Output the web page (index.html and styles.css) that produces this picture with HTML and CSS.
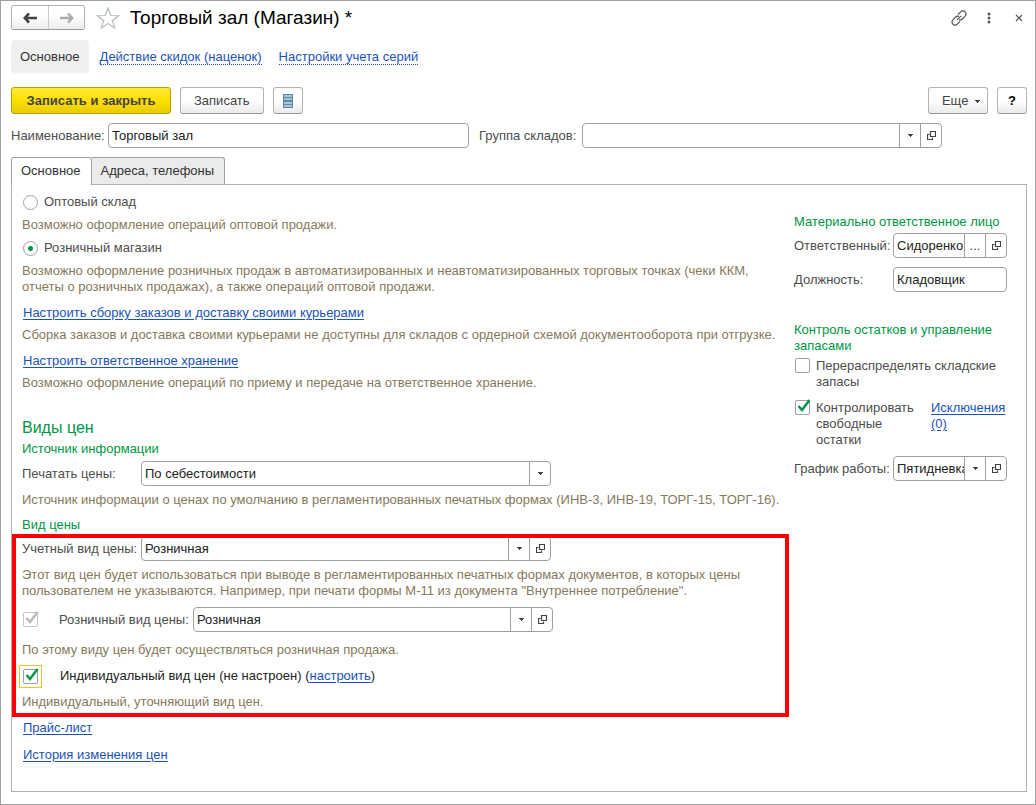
FILE: index.html
```html
<!DOCTYPE html>
<html lang="ru">
<head>
<meta charset="utf-8">
<meta name="viewport" content="width=device-width, initial-scale=1">
<title>Торговый зал (Магазин) *</title>
<link rel="stylesheet" href="styles.css">
</head>
<body>
<svg class="sprite" aria-hidden="true">
  <symbol id="caret" viewBox="0 0 5 3"><path d="M0 0h5v1h-1v1h-1v1h-1v-1h-1v-1h-1z" fill="#444"/></symbol>
  <symbol id="open" viewBox="0 0 9 9"><path d="M3.500.500h5v5h-5zM2.500 3.500h-2v5h5v-2" fill="none" stroke="#444" stroke-width="1.200"/></symbol>
</svg>
<div class="window">
  <header class="titlebar">
    <div class="history">
      <button type="button" class="history-btn" aria-label="Назад"><svg width="14" height="12" viewBox="0 0 14 12"><path d="M6 1.500 1.800 6l4.200 4.500M2 6h12" fill="none" stroke="#444" stroke-width="2.600"/></svg></button>
      <button type="button" class="history-btn" aria-label="Вперед"><svg width="14" height="12" viewBox="0 0 14 12"><path d="M8 1.500 12.200 6l-4.200 4.500M12 6H0" fill="none" stroke="#aaa" stroke-width="2.400"/></svg></button>
    </div>
    <button type="button" class="plain star" aria-label="В избранное"><svg width="24" height="22" viewBox="0 0 24 22"><path d="M12 1l2.700 7.500 8 .2-6.300 4.800 2.300 7.500-6.700-4.400L5.300 21l2.300-7.500L1.300 8.700l8-.2z" fill="#fff" stroke="#b4bac2" stroke-width="1.200"/></svg></button>
    <h1 class="title">Торговый зал (Магазин) *</h1>
    <div class="window-tools">
      <button type="button" class="plain" aria-label="Ссылка"><svg width="16" height="16" viewBox="0 0 16 16" fill="none" stroke="#555" stroke-width="1.200"><path d="M7 4.500l2.700-2.700a3 3 0 0 1 4.400 4.400L11.400 9a3 3 0 0 1-3.400.6M9 11.500l-2.700 2.700a3 3 0 0 1-4.400-4.400L4.600 7A3 3 0 0 1 8 6.400M5.800 10.200l4.400-4.400"/></svg></button>
      <button type="button" class="plain" aria-label="Меню"><svg width="4" height="12" viewBox="0 0 4 12" fill="#555"><circle cx="2" cy="2" r="1.500"/><circle cx="2" cy="6" r="1.500"/><circle cx="2" cy="10" r="1.500"/></svg></button>
      <button type="button" class="plain" aria-label="Закрыть"><svg width="8" height="8" viewBox="0 0 8 8"><path d="M1 1l6 6M7 1L1 7" stroke="#555" stroke-width="1.200"/></svg></button>
    </div>
  </header>

  <nav class="sections">
    <a class="section current" href="#main">Основное</a>
    <a class="section" href="#discounts"><span>Действие скидок (наценок)</span></a>
    <a class="section" href="#series"><span>Настройки учета серий</span></a>
  </nav>

  <div class="commands">
    <button type="button" class="btn primary">Записать и закрыть</button>
    <button type="button" class="btn">Записать</button>
    <button type="button" class="btn square" aria-label="Список"><svg width="10" height="14" viewBox="0 0 10 14"><path d="M0 0h10v14H0z" fill="#5f87a5"/><path d="M1 1h8v2H1zM1 4h8v2H1zM1 8h8v2H1zM1 11h8v2H1z" fill="#a9c5da"/></svg></button>
    <button type="button" class="btn more">Еще <svg width="5" height="3"><use href="#caret"/></svg></button>
    <button type="button" class="btn square help">?</button>
  </div>

  <div class="head-fields">
    <label for="name">Наименование:</label>
    <div class="field"><input id="name" type="text" value="Торговый зал"></div>
    <label for="group" class="group-label">Группа складов:</label>
    <div class="field pick open">
      <select id="group"><option></option></select>
      <span class="arrow"><svg width="5" height="3"><use href="#caret"/></svg></span>
      <button type="button" aria-label="Открыть группу"><svg width="9" height="9"><use href="#open"/></svg></button>
    </div>
  </div>

  <div class="tabs" role="tablist">
    <button type="button" class="tab active" role="tab" aria-selected="true">Основное</button>
    <button type="button" class="tab" role="tab" aria-selected="false">Адреса, телефоны</button>
  </div>

  <main class="panel">
    <div class="main-col">
      <section class="kind">
        <label class="choice"><input type="radio" name="kind">Оптовый склад</label>
        <p class="hint">Возможно оформление операций оптовой продажи.</p>
        <label class="choice"><input type="radio" name="kind" checked>Розничный магазин</label>
        <p class="hint">Возможно оформление розничных продаж в автоматизированных и неавтоматизированных торговых точках (чеки ККМ,<br>отчеты о розничных продажах), а также операций оптовой продажи.</p>
      </section>
      <section class="setup">
        <a href="#delivery">Настроить сборку заказов и доставку своими курьерами</a>
        <p class="hint">Сборка заказов и доставка своими курьерами не доступны для складов с ордерной схемой документооборота при отгрузке.</p>
      </section>
      <section class="setup">
        <a href="#storage">Настроить ответственное хранение</a>
        <p class="hint">Возможно оформление операций по приему и передаче на ответственное хранение.</p>
      </section>

      <section class="prices">
        <h2 class="heading">Виды цен</h2>
        <h3 class="subheading">Источник информации</h3>
        <div class="row">
          <label for="print">Печатать цены:</label>
          <div class="field pick">
            <select id="print"><option>По себестоимости</option></select>
            <span class="arrow"><svg width="5" height="3"><use href="#caret"/></svg></span>
          </div>
        </div>
        <p class="hint">Источник информации о ценах по умолчанию в регламентированных печатных формах (ИНВ-3, ИНВ-19, ТОРГ-15, ТОРГ-16).</p>
      </section>

      <h3 class="subheading kind-heading">Вид цены</h3>
      <section class="price-kind">
        <div class="row">
          <label for="account">Учетный вид цены:</label>
          <div class="field pick open">
            <select id="account"><option>Розничная</option></select>
            <span class="arrow"><svg width="5" height="3"><use href="#caret"/></svg></span>
            <button type="button" aria-label="Открыть учетный вид цены"><svg width="9" height="9"><use href="#open"/></svg></button>
          </div>
        </div>
        <p class="hint account-hint">Этот вид цен будет использоваться при выводе в регламентированных печатных формах документов, в которых цены<br>пользователем не указываются. Например, при печати формы М-11 из документа "Внутреннее потребление".</p>
        <div class="row retail">
          <span class="tick"><input type="checkbox" checked disabled aria-label="Розничный вид цены"><svg class="mark" viewBox="0 0 16 16"><path d="M3.500 7 7 11 14.500 1"/></svg></span>
          <label for="retail">Розничный вид цены:</label>
          <div class="field pick open">
            <select id="retail"><option>Розничная</option></select>
            <span class="arrow"><svg width="5" height="3"><use href="#caret"/></svg></span>
            <button type="button" aria-label="Открыть розничный вид цены"><svg width="9" height="9"><use href="#open"/></svg></button>
          </div>
        </div>
        <p class="hint">По этому виду цен будет осуществляться розничная продажа.</p>
        <div class="row individual">
          <span class="tick focused"><input id="individual" type="checkbox" checked><svg class="mark" viewBox="0 0 16 16"><path d="M3.500 7 7 11 14.500 1"/></svg></span>
          <span><label for="individual">Индивидуальный вид цен (не настроен)</label> (<a href="#setup">настроить</a>)</span>
        </div>
        <p class="hint">Индивидуальный, уточняющий вид цен.</p>
      </section>

      <div class="links">
        <a href="#pricelist">Прайс-лист</a>
        <a href="#history">История изменения цен</a>
      </div>
    </div>

    <aside class="side-col">
      <section class="side-group">
        <h3 class="subheading">Материально ответственное лицо</h3>
        <div class="row">
          <label for="person">Ответственный:</label>
          <div class="field choose">
            <input id="person" type="text" value="Сидоренко">
            <button type="button" aria-label="Выбрать">...</button>
            <button type="button" aria-label="Открыть ответственного"><svg width="9" height="9"><use href="#open"/></svg></button>
          </div>
        </div>
        <div class="row position">
          <label for="position">Должность:</label>
          <div class="field"><input id="position" type="text" value="Кладовщик"></div>
        </div>
      </section>
      <section class="side-group">
        <h3 class="subheading">Контроль остатков и управление запасами</h3>
        <div class="check-row">
          <span class="tick"><input id="redistribute" type="checkbox"></span>
          <label for="redistribute">Перераспределять складские запасы</label>
        </div>
        <div class="check-row control">
          <span class="tick"><input id="control" type="checkbox" checked><svg class="mark" viewBox="0 0 16 16"><path d="M3.500 7 7 11 14.500 1"/></svg></span>
          <label for="control">Контролировать свободные остатки</label>
          <a href="#exceptions">Исключения (0)</a>
        </div>
        <div class="row schedule">
          <label for="schedule">График работы:</label>
          <div class="field pick open">
            <select id="schedule"><option>Пятидневка</option></select>
            <span class="arrow"><svg width="5" height="3"><use href="#caret"/></svg></span>
            <button type="button" aria-label="Открыть график"><svg width="9" height="9"><use href="#open"/></svg></button>
          </div>
        </div>
      </section>
    </aside>
  </main>
</div>
</body>
</html>
```
FILE: styles.css
```css
* { box-sizing: border-box; }

body {
  margin: 0;
  background: #fff;
  color: #4d4d4d;
  font: 13px/16px "Liberation Sans", Arial, sans-serif;
}

h1, h2, h3, p { margin: 0; font-weight: normal; }

button, input, select { font: inherit; color: inherit; margin: 0; }

a { color: #1a53b8; text-underline-offset: 2px; }

.sprite { display: none; }

.window {
  min-height: 100vh;
  padding: 4px 8px 12px 10px;
  border: 1px solid #a0a0a0;
}

/* Title bar */

.titlebar { display: flex; align-items: center; height: 25px; }

.history {
  display: flex;
  height: 25px;
  border: 1px solid #b3b3b3;
  border-bottom-color: #999;
  border-radius: 3px;
  overflow: hidden;
}

.history-btn {
  display: grid;
  place-items: center;
  width: 36px;
  padding: 0;
  border: 0;
  background: linear-gradient(#fff 40%, #ececec);
}

.history-btn + .history-btn { border-left: 1px solid #ccc; }

.plain { display: grid; place-items: center; padding: 0; border: 0; background: none; }

.star { margin: 0 10px 0 11px; }

.title { color: #000; font-size: 19px; line-height: 24px; }

.window-tools { display: flex; align-items: center; gap: 14px; margin-left: auto; }

.window-tools .plain { width: 16px; height: 22px; }

/* Sections */

.sections { display: flex; margin-top: 10px; }

.section { margin-right: 17px; padding: 10px 0 7px; text-decoration: none; }

.section.current {
  margin-right: 11px;
  padding: 9px 9px 8px;
  border-radius: 4px;
  background: #f0f0f0;
  color: #333;
}

.section:not(.current) { padding-top: 9px; }

.section span { border-bottom: 1px dotted #1a53b8; }

/* Command bar */

.commands { display: flex; gap: 9px; margin-top: 14px; }

.btn {
  height: 27px;
  padding: 0 13px;
  border: 1px solid #b3b3b3;
  border-bottom-color: #999;
  border-radius: 3px;
  background: linear-gradient(#fff 50%, #eaeaea);
  color: #444;
}

.primary {
  min-width: 160px;
  border-color: #b3a000;
  background: linear-gradient(#ffe83a, #ffe000 50%, #e8cb00);
  font-weight: bold;
}

.square { display: grid; place-items: center; width: 30px; padding: 0; }

.more { margin-left: auto; padding: 0 7px 0 13px; }

.more svg { margin-left: 3px; vertical-align: 2px; }

.help { color: #000; font-weight: bold; }

/* Fields */

.field {
  display: grid;
  grid-template-columns: minmax(0, 1fr);
  height: 25px;
  border: 1px solid #a0a0a0;
  border-radius: 4px;
  background: #fff;
  color: #222;
}

.field.pick { grid-template-columns: minmax(0, 1fr) 21px; }
.field.open { grid-template-columns: minmax(0, 1fr) 21px 21px; }
.field.choose { grid-template-columns: minmax(0, 1fr) 21px 21px; }

.field input, .field select {
  grid-row: 1;
  grid-column: 1;
  width: 100%;
  height: 23px;
  padding: 0 0 0 3px;
  border: 0;
  outline: 0;
  background: none;
  appearance: none;
}

.field.pick select { grid-column: 1 / 3; padding-right: 21px; }

.field .arrow, .field button {
  display: grid;
  place-items: center;
  padding: 0;
  border: 0;
  border-left: 1px solid #a0a0a0;
  background: none;
  color: #444;
}

.field .arrow { grid-row: 1; grid-column: 2; pointer-events: none; }

.head-fields {
  display: grid;
  grid-template-columns: 97px 361fr 113px 360fr 85px;
  align-items: center;
  margin-top: 9px;
}

.group-label { margin-left: 10px; }

/* Tabs */

.tabs { display: flex; margin-top: 9px; }

.tab {
  height: 27px;
  padding: 0 10px 1px 9px;
  border: 1px solid #a0a0a0;
  border-bottom: 0;
  border-left: 0;
  border-radius: 0 3px 0 0;
  background: #ebebeb;
  color: #333;
}

.tab.active {
  height: 28px;
  margin-bottom: -1px;
  padding-bottom: 2px;
  border-left: 1px solid #a0a0a0;
  border-radius: 3px 3px 0 0;
  background: #fff;
  z-index: 1;
}

.panel {
  display: grid;
  grid-template-columns: minmax(0, 1fr) 213px;
  gap: 8px;
  padding: 9px 19px 28px 10px;
  border: 1px solid #b0b0b0;
}

.hint { color: #857a5b; }

.heading { color: #009646; font-size: 16px; line-height: 20px; }

.subheading { color: #009646; font-size: 13px; }

.row { display: grid; grid-template-columns: 119px minmax(0, 410px); align-items: center; }

/* Main column */

.kind { display: grid; gap: 7px; }

.choice { display: flex; align-items: center; gap: 6px; padding-left: 1px; }

input[type="radio"] {
  width: 15px;
  height: 15px;
  border: 1px solid #a0a0a0;
  border-radius: 50%;
  background: #fff;
  appearance: none;
}

input[type="radio"]:checked { background: radial-gradient(circle, #009646 2px, #fff 3px); }

.setup { display: grid; justify-items: start; gap: 6px; margin-top: 10px; }

.setup a, .links a { margin-left: 1px; }

.prices { margin-top: 27px; }

.prices .subheading { margin-top: 3px; }

.prices .row { margin-top: 4px; }

.prices .hint { margin-top: 6px; }

.kind-heading { margin-top: 9px; }

/* Group outlined by the red attention frame */
.price-kind { position: relative; display: grid; gap: 10px; margin-top: 3px; }

.price-kind::after {
  content: "";
  position: absolute;
  inset: -2px -3px -7px -10px;
  border: 4px solid #f00;
  pointer-events: none;
}

.account-hint { margin: -4px 0 -2px; }

.row.retail { grid-template-columns: 37px 134px minmax(0, 360px); }

.row.individual { grid-template-columns: 38px 1fr; color: #222; }

.tick { display: grid; width: 15px; height: 15px; }

.row .tick { margin-left: 1px; }

.tick input {
  grid-area: 1 / 1;
  width: 15px;
  height: 15px;
  border: 1px solid #a0a0a0;
  border-radius: 2px;
  background: #fff;
  appearance: none;
}

.tick .mark {
  grid-area: 1 / 1;
  width: 16px;
  height: 16px;
  margin-top: -1px;
  fill: none;
  stroke: #009646;
  stroke-width: 2.5px;
  pointer-events: none;
}

.tick input:disabled { border-color: #c4c4c4; }

.tick input:disabled + .mark { stroke: #bbb; }

.tick.focused { outline: 1px solid #f5c31c; outline-offset: 3px; }

.links { display: grid; justify-items: start; gap: 11px; margin-top: 10px; }

/* Side column */

.side-col { padding-top: 20px; }

.side-group + .side-group { margin-top: 30px; }

.side-col .row { grid-template-columns: 99px minmax(0, 1fr); margin-top: 3px; }

.side-col .row.position { margin-top: 9px; }

.side-col .row.schedule { margin-top: 8px; }

.check-row { display: grid; grid-template-columns: 21px 1fr; margin: 4px 0 0 1px; }

.check-row.control { grid-template-columns: 21px 1fr 76px; margin-top: 10px; }

.check-row.control label { padding-right: 16px; }
```
